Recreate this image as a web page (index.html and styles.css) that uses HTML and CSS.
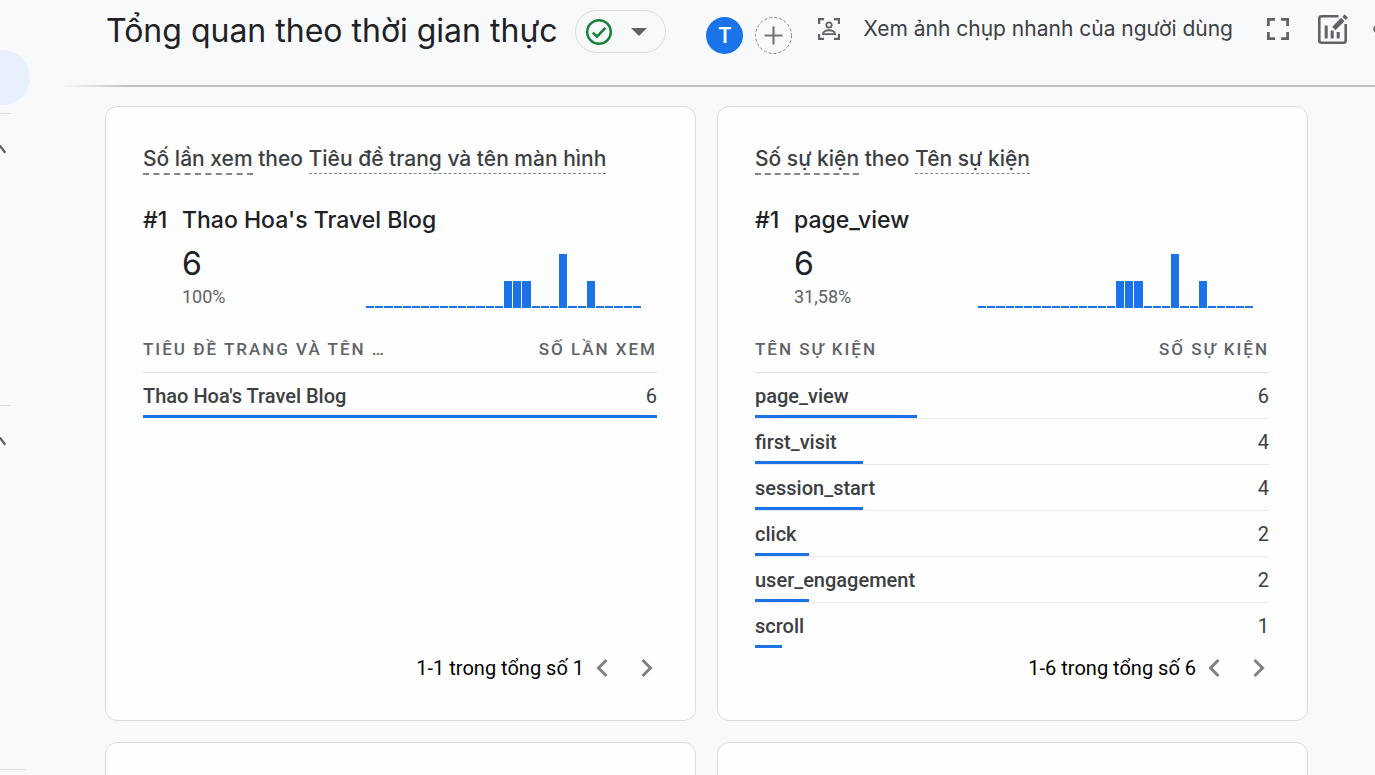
FILE: index.html
```html
<!DOCTYPE html>
<html lang="vi">
<head>
<meta charset="utf-8">
<meta name="viewport" content="width=device-width, initial-scale=1">
<title>Tổng quan theo thời gian thực</title>
<link rel="stylesheet" href="styles.css">
</head>
<body>
<div class="app">
  <nav class="rail" aria-label="Điều hướng">
    <a class="rail-active" href="#" aria-label="Theo thời gian thực"></a>
    <div class="rail-group">
      <button class="rail-toggle" aria-label="Thu gọn"><svg width="6" height="9" viewBox="0 0 6 9"><path d="M-3 3.500L-1-.5L5.300 7.800" fill="none" stroke="#5f6368" stroke-width="2.400"/></svg></button>
    </div>
    <div class="rail-group rail-group-tall">
      <button class="rail-toggle" aria-label="Thu gọn"><svg width="6" height="9" viewBox="0 0 6 9"><path d="M-3 3.500L-1-.5L5.300 7.800" fill="none" stroke="#5f6368" stroke-width="2.400"/></svg></button>
    </div>
    <div class="rail-end"></div>
  </nav>

  <div class="page">
    <header class="topbar">
      <h1 class="title">Tổng quan theo thời gian thực</h1>
      <button class="status" aria-label="Trạng thái dữ liệu">
        <svg width="26" height="26" viewBox="0 0 26 26" fill="none" stroke="#188038"><circle cx="13" cy="13" r="11.800" stroke-width="2.400"/><path d="M6.800 13.600L11 17.600L19.300 8.900" stroke-width="2.600"/></svg>
        <svg width="16" height="8" viewBox="0 0 16 8"><path d="M0 0H16L8 8Z" fill="#5f6368"/></svg>
      </button>
      <div class="compare">
        <button class="avatar">T</button>
        <button class="add" aria-label="Thêm so sánh">
          <svg width="37" height="37" viewBox="0 0 37 37" fill="none"><circle cx="18.500" cy="18.500" r="18" stroke="#80868b" stroke-dasharray="3 2"/><path d="M18.500 9.500V27.500M9.500 18.500H27.500" stroke="#757575" stroke-width="2.200"/></svg>
        </button>
      </div>
      <button class="snapshot">
        <svg width="22" height="22" viewBox="0 0 22 22" fill="none" stroke="#5f6368" stroke-width="2.200"><path d="M1.100 6V1.100H6M16 1.100H20.900V6M20.900 16V20.900H16M6 20.900H1.100V16"/><circle cx="11" cy="7" r="2.700" stroke-width="1.800"/><path d="M4.900 16.200C4.900 10.900 17.100 10.900 17.100 16.200Z" stroke-width="1.800"/></svg>
        <span>Xem ảnh chụp nhanh của người dùng</span>
      </button>
      <button class="icon-btn fullscreen" aria-label="Toàn màn hình">
        <svg width="22" height="22" viewBox="0 0 22 22" fill="none" stroke="#5f6368" stroke-width="2.800"><path d="M1.400 8V1.400H8M14 1.400H20.600V8M20.600 14V20.600H14M8 20.600H1.400V14"/></svg>
      </button>
      <button class="icon-btn edit" aria-label="Chỉnh sửa báo cáo">
        <svg width="30" height="32" viewBox="0 0 30 32" fill="none" stroke="#5f6368"><path d="M20.500 3.300H3.500Q1.300 3.300 1.300 5.500V27.500Q1.300 29.700 3.500 29.700H25.500Q27.700 29.700 27.700 27.500V11" stroke-width="2.600"/><path d="M8.200 12.500V25.500M14.200 17.500V25.500M20.200 19V25.500" stroke-width="3"/><path d="M15.800 15.500L24.800 6.500" stroke-width="4.600"/><path d="M26 5.300L28.300 3" stroke-width="4.600"/></svg>
      </button>
      <button class="icon-btn share" aria-label="Chia sẻ">
        <svg width="24" height="26" viewBox="0 0 24 26" fill="none" stroke="#5f6368" stroke-width="2.400"><circle cx="4.500" cy="13" r="3"/><circle cx="18" cy="5" r="3"/><circle cx="18" cy="21" r="3"/><path d="M7 11.500L15.500 6.500M7 14.500L15.500 19.500"/></svg>
      </button>
    </header>

    <main class="cards">
      <section class="card">
        <h2 class="card-title"><a class="metric" href="#">Số lần xem</a> theo <a class="dimension" href="#">Tiêu đề trang và tên màn hình</a></h2>
        <div class="top">
          <div class="rank">#1</div>
          <div class="top-name">Thao Hoa's Travel Blog</div>
          <div class="top-stats">
            <div class="top-value">6</div>
            <div class="top-share">100%</div>
          </div>
          <div class="chart" aria-hidden="true"><i></i><i></i><i></i><i></i><i></i><i></i><i></i><i></i><i></i><i></i><i></i><i></i><i></i><i></i><i></i><i class="half"></i><i class="half"></i><i class="half"></i><i></i><i></i><i></i><i class="full"></i><i></i><i></i><i class="half"></i><i></i><i></i><i></i><i></i><i></i></div>
        </div>
        <table class="data">
          <thead><tr><th>TIÊU ĐỀ TRANG VÀ TÊN …</th><th>SỐ LẦN XEM</th></tr></thead>
          <tbody>
            <tr><td>Thao Hoa's Travel Blog<span class="bar" style="width:100%"></span></td><td>6</td></tr>
          </tbody>
        </table>
        <div class="pager">
          <span>1-1 trong tổng số 1</span>
          <button aria-label="Trang trước"><svg width="12" height="18" viewBox="0 0 12 18"><path d="M10.500 1L2.500 9L10.500 17" fill="none" stroke="#808080" stroke-width="3"/></svg></button>
          <button aria-label="Trang sau"><svg width="12" height="18" viewBox="0 0 12 18"><path d="M1.500 1L9.500 9L1.500 17" fill="none" stroke="#808080" stroke-width="3"/></svg></button>
        </div>
      </section>

      <section class="card">
        <h2 class="card-title"><a class="metric" href="#">Số sự kiện</a> theo <a class="dimension" href="#">Tên sự kiện</a></h2>
        <div class="top">
          <div class="rank">#1</div>
          <div class="top-name">page_view</div>
          <div class="top-stats">
            <div class="top-value">6</div>
            <div class="top-share">31,58%</div>
          </div>
          <div class="chart" aria-hidden="true"><i></i><i></i><i></i><i></i><i></i><i></i><i></i><i></i><i></i><i></i><i></i><i></i><i></i><i></i><i></i><i class="half"></i><i class="half"></i><i class="half"></i><i></i><i></i><i></i><i class="full"></i><i></i><i></i><i class="half"></i><i></i><i></i><i></i><i></i><i></i></div>
        </div>
        <table class="data">
          <thead><tr><th>TÊN SỰ KIỆN</th><th>SỐ SỰ KIỆN</th></tr></thead>
          <tbody>
            <tr><td>page_view<span class="bar" style="width:31.58%"></span></td><td>6</td></tr>
            <tr><td>first_visit<span class="bar" style="width:21.05%"></span></td><td>4</td></tr>
            <tr><td>session_start<span class="bar" style="width:21.05%"></span></td><td>4</td></tr>
            <tr><td>click<span class="bar" style="width:10.53%"></span></td><td>2</td></tr>
            <tr><td>user_engagement<span class="bar" style="width:10.53%"></span></td><td>2</td></tr>
            <tr><td>scroll<span class="bar" style="width:5.26%"></span></td><td>1</td></tr>
          </tbody>
        </table>
        <div class="pager">
          <span>1-6 trong tổng số 6</span>
          <button aria-label="Trang trước"><svg width="12" height="18" viewBox="0 0 12 18"><path d="M10.500 1L2.500 9L10.500 17" fill="none" stroke="#808080" stroke-width="3"/></svg></button>
          <button aria-label="Trang sau"><svg width="12" height="18" viewBox="0 0 12 18"><path d="M1.500 1L9.500 9L1.500 17" fill="none" stroke="#808080" stroke-width="3"/></svg></button>
        </div>
      </section>

      <section class="card"></section>
      <section class="card"></section>
    </main>
  </div>
</div>
</body>
</html>
```
FILE: styles.css
```css
* { box-sizing: border-box; }

body {
  margin: 0;
  background: #f8f9fb;
  color: #3c4043;
  font-family: Roboto, "Noto Sans", sans-serif;
  font-size: 20px;
  line-height: 24px;
}

button {
  display: flex;
  align-items: center;
  flex: none;
  padding: 0;
  border: 0;
  background: none;
  color: inherit;
  font: inherit;
  cursor: pointer;
}

svg { display: block; flex: none; overflow: visible; }

.app { display: flex; height: 100vh; overflow: hidden; }

/* Collapsed navigation rail */
.rail { flex: none; width: 60px; padding-top: 50px; overflow: hidden; }
.rail-active {
  display: block;
  width: 30px;
  height: 55px;
  margin-bottom: 8px;
  border-radius: 0 28px 28px 0;
  background: #e8f0fe;
}
.rail-group { width: 11px; height: 292px; padding-top: 31px; border-top: 1px solid #dadce0; }
.rail-group-tall { height: 364px; }
.rail-toggle svg { overflow: hidden; }
.rail-end { width: 26px; border-top: 1px solid #dadce0; }

.page { flex: 1; min-width: 0; overflow: hidden; }

/* Top bar */
.topbar {
  display: flex;
  align-items: flex-start;
  height: 88px;
  padding: 10px 0 0 46px;
  overflow: hidden;
  background: linear-gradient(90deg, #bdc1c600, #bdc1c6 70px) 0 85px / 100% 2px no-repeat;
}
.title {
  margin: 0;
  color: #202124;
  font: 400 32px/42px Inter, "Noto Sans", sans-serif;
  white-space: nowrap;
}
.status {
  justify-content: space-between;
  width: 91px;
  height: 43px;
  margin-left: auto;
  padding: 0 18px 0 10px;
  border: 1px solid #dadce0;
  border-radius: 22px;
}
.compare { display: flex; gap: 12px; margin: 7px 0 0 40px; }
.avatar {
  justify-content: center;
  width: 37px;
  height: 37px;
  border-radius: 50%;
  background: #1a73e8;
  color: #fff;
  font: 600 21px/37px Inter, sans-serif;
}
.snapshot {
  gap: 23px;
  height: 38px;
  margin-left: 26px;
  font: 400 21px/28px Inter, "Noto Sans", sans-serif;
  white-space: nowrap;
}
.icon-btn { height: 38px; }
.fullscreen { margin-left: 34px; }
.edit { margin-left: 29px; }
.share { width: 2px; margin-left: 25px; overflow: hidden; }

/* Report cards */
.cards {
  display: grid;
  grid-template-columns: 1fr 1fr;
  gap: 21px;
  padding: 18px 67px 0 45px;
}
.card {
  display: flex;
  flex-direction: column;
  min-height: 200px;
  padding: 38px 38px 33px 37px;
  border: 1px solid #dadce0;
  border-radius: 12px;
  background: #fefefe;
}
.card-title {
  margin: 0;
  font: 500 21px/28px Inter, "Noto Sans", sans-serif;
  white-space: nowrap;
}
.card-title a { display: inline-block; color: inherit; text-decoration: none; }
.metric { border-bottom: 2px dashed #80868b; }
.dimension { border-bottom: 1px dashed #80868b; }

.top {
  display: grid;
  grid-template-columns: 39px 1fr 275px;
  margin: 29px 16px 0 0;
  color: #202124;
}
.rank, .top-name { font: 500 23px/32px Inter, "Noto Sans", sans-serif; }
.top-name { grid-column: 2 / 4; }
.top-stats { grid-column: 2; padding-top: 9px; }
.top-value { font: 400 32px/38px Inter, sans-serif; }
.top-share { margin-top: 2px; color: #5f6368; font-size: 18px; line-height: 24px; }
.chart {
  display: flex;
  align-items: flex-end;
  gap: 1px;
  height: 72px;
}
.chart i { flex: 1; height: 2px; background: #1a73e8; }
.chart .half { height: 27px; }
.chart .full { height: 54px; }

.data { width: 100%; margin-top: 17px; border-collapse: separate; border-spacing: 0; }
.data th {
  height: 47px;
  padding: 0;
  border-bottom: 1px solid #dadce0;
  color: #5f6368;
  font-size: 17px;
  font-weight: 500;
  letter-spacing: 2px;
  text-align: left;
  white-space: nowrap;
}
.data tbody tr { position: relative; }
.data td { height: 46px; padding: 0; border-bottom: 1px solid #e8eaed; font-weight: 500; }
.data tbody tr:last-child td { border-bottom-color: transparent; }
.data th:last-child, .data td:last-child { text-align: right; }
.data td:last-child { font-weight: 400; }
.bar { position: absolute; left: 0; bottom: 1px; height: 3px; background: #1a73e8; }

.pager {
  display: flex;
  justify-content: flex-end;
  align-items: center;
  margin-top: auto;
  padding-right: 4px;
  color: #000;
  line-height: 38px;
}
.pager button { margin-left: 12px; }
.pager button + button { margin-left: 33px; }
```
